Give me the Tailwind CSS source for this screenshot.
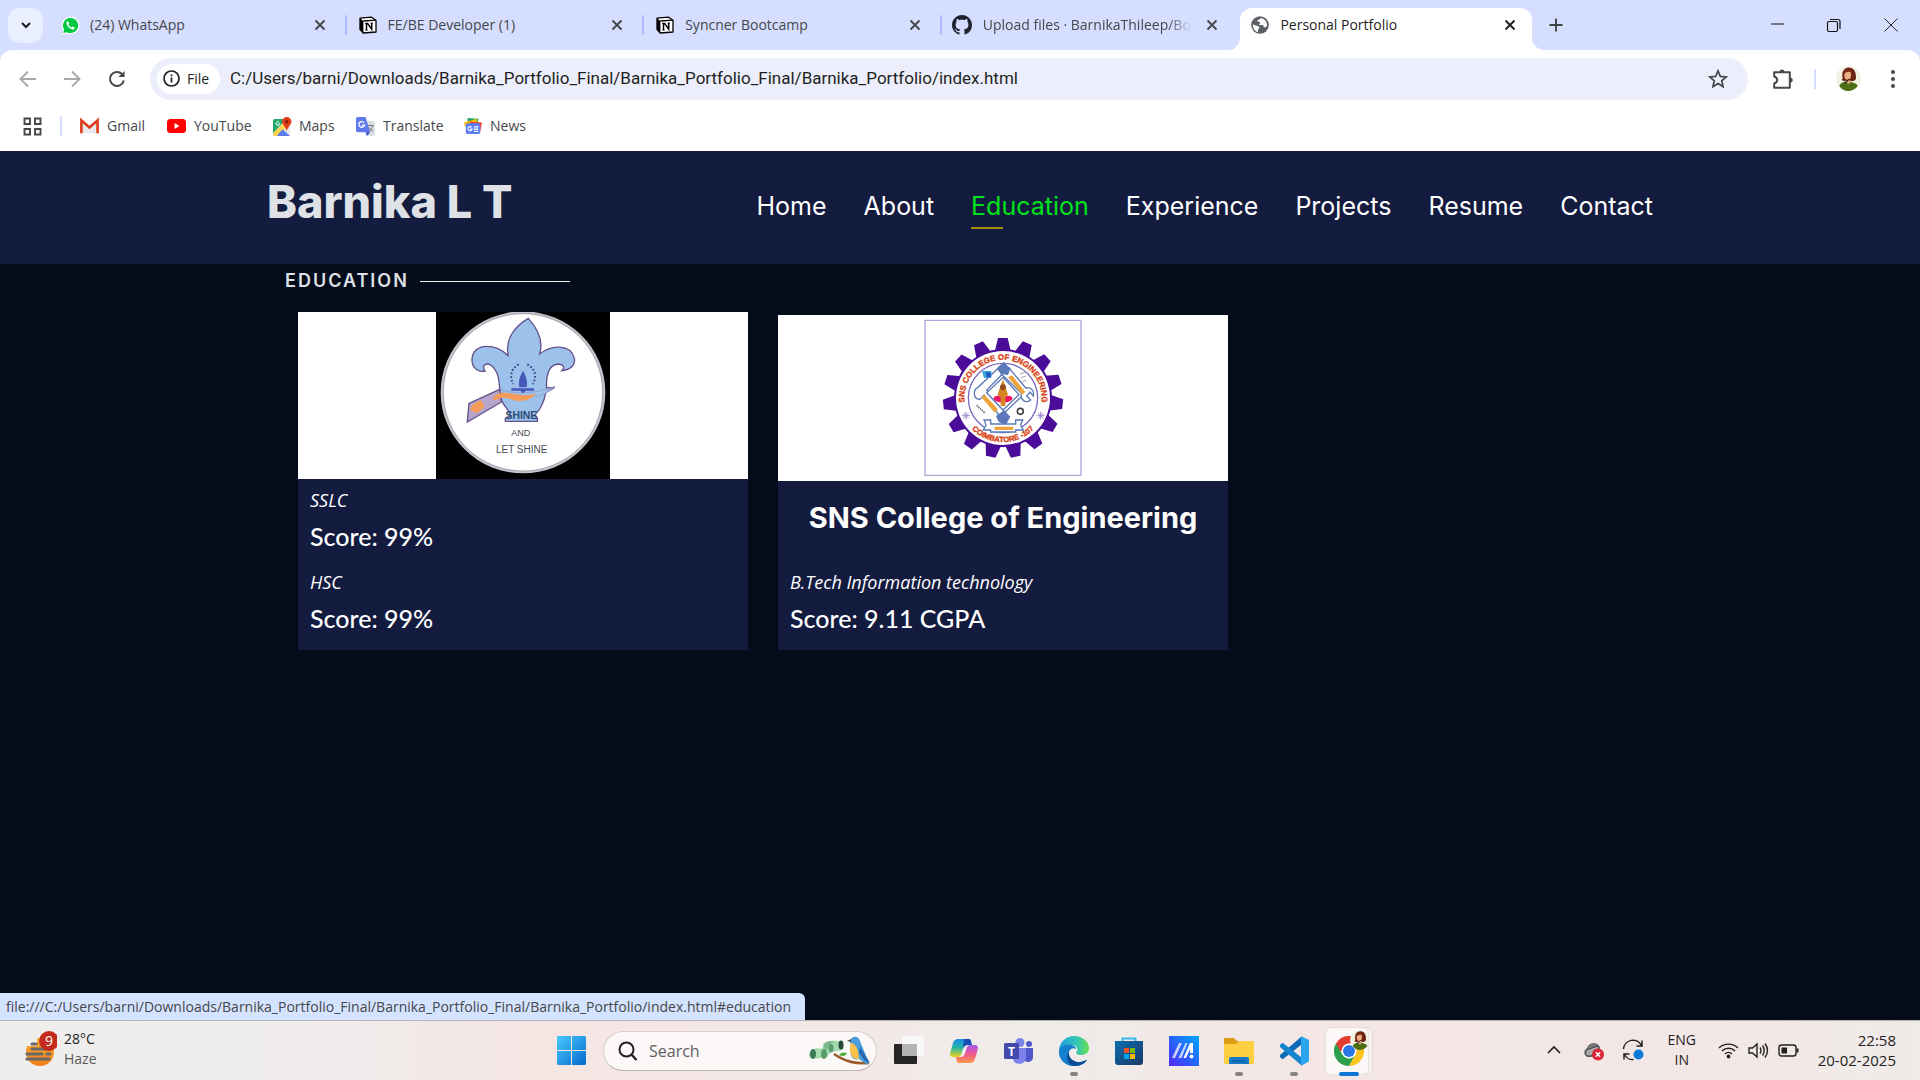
<!DOCTYPE html>
<html lang="en">
<head>
<meta charset="utf-8">
<meta name="viewport" content="width=device-width, initial-scale=1">
<title>Personal Portfolio</title>
<script src="https://cdn.jsdelivr.net/npm/@tailwindcss/browser@4"></script>
</head>
<body class="flex min-h-screen flex-col overflow-x-hidden bg-[#040b1b] font-['Open_Sans',sans-serif] text-sm text-[#45474a]">

<!-- shared icons -->
<svg class="hidden" aria-hidden="true">
  <symbol id="close" viewBox="0 0 16 16"><path d="M3.5 3.5l9 9M12.5 3.5l-9 9" stroke="currentColor" stroke-width="1.9" fill="none"/></symbol>
  <symbol id="notion" viewBox="0 0 18 18"><path d="M1 2.2L12.5 1.2l4.500 3V16l-12.800 1L1 13.400z" fill="#fff" stroke="#000" stroke-width="1.300" stroke-linejoin="round"/><path d="M1 2.200L4.400 5v12L1 13.400z"/><path d="M4.400 5l12.400-.8" stroke="#000" stroke-width="1.300"/><path d="M7.500 14V7.500h1.200l4 5.700V7" fill="none" stroke="#000" stroke-width="1.500"/><path d="M6 7.400h2.300M6.300 14.200h2.400M11.400 7h2.800" stroke="#000" stroke-width=".8"/></symbol>
  <symbol id="avatar" viewBox="0 0 30 30"><circle cx="15" cy="15" r="15" fill="#f3f2e2"/><path d="M8 15C6 6 11 1 17 2c6 1 7 7 7 12 0 4-5 5-8 3l-6 1c-3 0-4-1-2-3z" fill="#6b2314"/><ellipse cx="14" cy="11" rx="4" ry="5.500" fill="#f0ae83"/><path d="M9 10c0-6 8-9 10-3-4 0-7 0-10 3z" fill="#7d2b18"/><path d="M4 24c2-5 7-5 10-5 6 0 11 2 12 5-6 8-17 8-22 0z" fill="#4d6f14"/><path d="M11 18l4 4 4-4" fill="#eaa27b"/><path d="M10 20c3 0 3-3 6-4" stroke="#2b1612" stroke-width="1.500" fill="none"/></symbol>
</svg>

<!-- tab strip -->
<header class="bg-white">
  <div class="flex h-[50px] items-center justify-between bg-[#d6deff] pl-2">
    <button aria-label="Search tabs" class="grid size-[35px] shrink-0 place-items-center rounded-xl bg-[#e9efff]"><svg class="size-4" viewBox="0 0 16 16"><path d="M4 6l4 4 4-4" fill="none" stroke="#1d1d1f" stroke-width="2"/></svg></button>
    <div class="ml-1 grid h-full max-w-[1488px] flex-1 grid-cols-5 items-center">
      <div class="flex items-center pl-[14px] pr-[17px]">
        <svg class="size-[19px] shrink-0" viewBox="0 0 20 20"><path d="M.8 19.500l1.300-5A9.200 9.200 0 1 1 6 18.200z" fill="#fff"/><path d="M2.200 18l1-3.900A8 8 0 1 1 6.200 17z" fill="#00c940"/><path d="M7.200 5.300c-.9.2-1.600 1.200-1.300 2.600.5 2.700 3 5.500 6 6.200 1.500.3 2.600-.6 2.600-1.800l-2.100-1.200-1.100 1.100C9.600 11.400 8.300 10 7.800 8.600l.8-1.100z" fill="#fff"/></svg>
        <span class="ml-[10px] flex-1 truncate">(24) WhatsApp</span>
        <button aria-label="Close tab" class="size-4"><svg class="size-4"><use href="#close"/></svg></button>
      </div>
      <div class="relative flex items-center pl-[14px] pr-[17px]">
        <i class="absolute left-0 h-5 w-[2px] rounded bg-[#adbcff]"></i>
        <svg class="size-[18px] shrink-0"><use href="#notion"/></svg>
        <span class="ml-[11px] flex-1 truncate">FE/BE Developer (1)</span>
        <button aria-label="Close tab" class="size-4"><svg class="size-4"><use href="#close"/></svg></button>
      </div>
      <div class="relative flex items-center pl-[14px] pr-[17px]">
        <i class="absolute left-0 h-5 w-[2px] rounded bg-[#adbcff]"></i>
        <svg class="size-[18px] shrink-0"><use href="#notion"/></svg>
        <span class="ml-[11px] flex-1 truncate">Syncner Bootcamp</span>
        <button aria-label="Close tab" class="size-4"><svg class="size-4"><use href="#close"/></svg></button>
      </div>
      <div class="relative flex items-center pl-[12px] pr-[17px]">
        <i class="absolute left-0 h-5 w-[2px] rounded bg-[#adbcff]"></i>
        <svg class="size-5 shrink-0" viewBox="0 0 16 16"><path fill="#1f2430" d="M8 0C3.580 0 0 3.580 0 8c0 3.540 2.290 6.530 5.470 7.590.4.070.55-.17.55-.38 0-.19-.01-.82-.01-1.490-2.010.37-2.530-.49-2.690-.94-.09-.23-.48-.94-.82-1.130-.28-.15-.68-.52-.01-.53.63-.01 1.080.58 1.230.82.72 1.210 1.870.87 2.330.66.07-.52.28-.87.51-1.070-1.780-.2-3.640-.89-3.640-3.950 0-.87.31-1.590.82-2.150-.08-.2-.36-1.020.08-2.120 0 0 .67-.21 2.200.82.64-.18 1.320-.27 2-.27s1.360.09 2 .27c1.530-1.040 2.200-.82 2.200-.82.44 1.100.16 1.920.08 2.120.51.56.82 1.270.82 2.150 0 3.070-1.870 3.750-3.650 3.950.29.25.54.73.54 1.480 0 1.070-.01 1.930-.01 2.200 0 .21.15.46.55.38A8.010 8.010 0 0 0 16 8c0-4.420-3.580-8-8-8z"/></svg>
        <span class="ml-[11px] mr-3 flex-1 overflow-hidden whitespace-nowrap [mask-image:linear-gradient(to_right,black_88%,transparent)]">Upload files · BarnikaThileep/Bo</span>
        <button aria-label="Close tab" class="size-4"><svg class="size-4"><use href="#close"/></svg></button>
      </div>
      <div class="relative mx-[3px] mt-2 flex h-[42px] items-center rounded-t-xl bg-white pb-2 pl-[11px] pr-[14px] text-[#1f1f1f]">
        <i class="absolute -left-3 bottom-0 size-3 bg-[radial-gradient(circle_at_0_0,#d6deff_12px,white_12px)]"></i>
        <i class="absolute -right-3 bottom-0 size-3 bg-[radial-gradient(circle_at_100%_0,#d6deff_12px,white_12px)]"></i>
        <svg class="size-[18px] shrink-0" viewBox="0 0 18 18"><circle cx="9" cy="9" r="8.800" fill="#5c6066"/><path d="M10 2c-1 2-3 1-4 3 1 1 3 0 3 2 0 1-1 1-1 2h4l1 2c1 1 2 0 3-1 .5-4-2-7-6-8zM2 8c1 2 5 1 6 3 1 1 0 2-1 2v3C4 16 1.500 12 2 8z" fill="#fff"/></svg>
        <span class="ml-[11px] flex-1 truncate">Personal Portfolio</span>
        <button aria-label="Close tab" class="size-4"><svg class="size-4"><use href="#close"/></svg></button>
      </div>
    </div>
    <button aria-label="New tab" class="ml-[13px] grid size-4 shrink-0 place-items-center"><svg class="size-4" viewBox="0 0 16 16"><path d="M8 1.500v13M1.500 8h13" stroke="#3f4247" stroke-width="1.900"/></svg></button>
    <div class="ml-auto flex shrink-0">
      <button aria-label="Minimize" class="grid h-10 w-[57px] place-items-center"><svg class="size-4" viewBox="0 0 16 16"><path d="M2 7h13" stroke="#111"/></svg></button>
      <button aria-label="Restore" class="grid h-10 w-[57px] place-items-center"><svg class="size-4" viewBox="0 0 16 16"><rect x="1.500" y="4.500" width="10" height="10" rx="1.500" fill="none" stroke="#111" stroke-width="1.200"/><path d="M4 2.500h8a2 2 0 0 1 2 2V12" fill="none" stroke="#111" stroke-width="1.200"/></svg></button>
      <button aria-label="Close window" class="grid h-10 w-[58px] place-items-center"><svg class="size-4" viewBox="0 0 16 16"><path d="M1.500 1.500l13 13M14.500 1.500l-13 13" stroke="#222"/></svg></button>
    </div>
  </div>

  <!-- toolbar -->
  <div class="flex items-center bg-[#d6deff]"><div class="flex h-[57px] w-full items-center rounded-t-xl bg-white pl-[18px] pr-[15px]">
    <button aria-label="Back" class="size-5"><svg viewBox="0 0 20 20"><path d="M18 10H3M10 2.500L2.500 10l7.500 7.500" fill="none" stroke="#a7a9ad" stroke-width="1.900"/></svg></button>
    <button aria-label="Forward" class="ml-6 size-5"><svg viewBox="0 0 20 20"><path d="M2 10h15M10 2.500l7.500 7.500-7.500 7.500" fill="none" stroke="#a7a9ad" stroke-width="1.900"/></svg></button>
    <button aria-label="Reload" class="ml-[25px] size-5"><svg viewBox="0 0 20 20"><path d="M16.800 11.500A7 7 0 1 1 15 5l2 2" fill="none" stroke="#45474a" stroke-width="2"/><path d="M17.500 2v6h-6z" fill="#45474a"/></svg></button>
    <div class="ml-[23px] flex h-[42px] flex-1 items-center rounded-full bg-[#eceffb] pl-[7px] pr-5">
      <button class="flex h-[30px] w-[63px] shrink-0 items-center gap-[7px] rounded-full bg-white pl-[6px] font-medium text-[#1f1f1f]"><svg class="size-[17px]" viewBox="0 0 17 17"><circle cx="8.500" cy="8.500" r="7.500" fill="none" stroke="#1f1f1f" stroke-width="1.700"/><path d="M8.500 7.500v5M8.500 4.500v1.800" stroke="#1f1f1f" stroke-width="1.700"/></svg>File</button>
      <input aria-label="Address" class="ml-[10px] min-w-0 flex-1 bg-transparent font-['Roboto',sans-serif] text-[17px] text-[#1f1f1f] outline-none" value="C:/Users/barni/Downloads/Barnika_Portfolio_Final/Barnika_Portfolio_Final/Barnika_Portfolio/index.html">
      <button aria-label="Bookmark this page" class="size-5"><svg viewBox="0 0 20 20"><path d="M10 1.800l2.300 5.600 6 .5-4.600 3.900 1.400 5.900-5.100-3.100-5.100 3.100 1.400-5.900-4.600-3.900 6-.5z" fill="none" stroke="#45474a" stroke-width="1.700"/></svg></button>
    </div>
    <button aria-label="Extensions" class="ml-[24px] size-[22px]"><svg viewBox="0 0 22 22"><path d="M2.200 4.200h15.600v15.600H2.200v-4.300c4-1.200 4-5.800 0-7z" fill="none" stroke="#45474a" stroke-width="2" stroke-linejoin="round"/><path d="M7.500 4a2.500 2.500 0 0 1 5 0zM18.200 9.500a2.500 2.500 0 0 1 0 5z" fill="#45474a"/></svg></button>
    <i class="ml-[20px] h-5 w-[2px] bg-[#d6deff]"></i>
    <button aria-label="Profile" class="ml-[20px] size-[25px]"><svg class="size-full"><use href="#avatar"/></svg></button>
    <button aria-label="Menu" class="ml-[20px] size-6"><svg viewBox="0 0 24 24" fill="#45474a"><circle cx="12" cy="5" r="2"/><circle cx="12" cy="12" r="2"/><circle cx="12" cy="19" r="2"/></svg></button>
  </div></div>

  <!-- bookmarks -->
  <nav aria-label="Bookmarks" class="flex h-11 items-center pb-[6px] pl-[23px] text-sm">
    <button aria-label="All bookmarks" class="size-[19px]"><svg viewBox="0 0 19 19"><path d="M1.500 1.500h5.500v5.500H1.500zM12 1.500h5.500v5.500H12zM1.500 12h5.500v5.500H1.500zM12 12h5.500v5.500H12z" fill="none" stroke="#45474a" stroke-width="1.900"/></svg></button>
    <i class="ml-[18px] h-5 w-[2px] bg-[#d6deff]"></i>
    <a href="#" class="ml-[18px] flex w-[87px] items-center gap-[8px]"><svg class="size-[19px]" viewBox="0 0 20 20"><path d="M3 4l7 6 7-6v13H3z" fill="#e8eaed"/><path d="M1.500 17V3.500L10 11l8.500-7.500V17" fill="none" stroke="#dd3b1e" stroke-width="2.800"/></svg>Gmail</a>
    <a href="#" class="flex w-[106px] items-center gap-[8px]"><svg class="h-[14px] w-[19px]" viewBox="0 0 19 14"><rect width="19" height="14" rx="3.500" fill="#f00"/><path d="M7.500 4v6l5-3z" fill="#fff"/></svg>YouTube</a>
    <a href="#" class="flex w-[83px] items-center gap-[7px]"><svg class="size-[19px]" viewBox="0 0 20 20"><rect y="2" width="18" height="18" rx="2" fill="#e5e7eb"/><path d="M0 4a2 2 0 0 1 2-2h12L0 17z" fill="#22a565"/><path d="M0 17L15 3l3 4L5 20H2a2 2 0 0 1-2-2z" fill="#fbd34b"/><path d="M4 20l6-7 8 7z" fill="#5c7cf0"/><path d="M14.500 0a5 5 0 0 1 5 5c0 3-4 5-5 10-1-5-5-7-5-10a5 5 0 0 1 5-5z" fill="#e13c1b"/><circle cx="14.500" cy="5" r="1.800" fill="#7b1a0b"/><path d="M6.500 5.500A2 2 0 1 0 7 7.200H5" fill="none" stroke="#fff"/></svg>Maps</a>
    <a href="#" class="flex w-[108px] items-center gap-[8px]"><svg class="size-[19px]" viewBox="0 0 20 20"><path d="M8 4h10a2 2 0 0 1 2 2v12a2 2 0 0 1-2 2h-6z" fill="#dcdfe3"/><path d="M2 0h8l5 16H2a2 2 0 0 1-2-2V2a2 2 0 0 1 2-2z" fill="#5f79ee"/><path d="M10 16h5l-3.500 4z" fill="#3c50c8"/><path d="M8.500 6A3 3 0 1 0 9 8.500H6" fill="none" stroke="#fff" stroke-width="1.400"/><path d="M12.500 9h6M15.500 8v1M17.500 9c-.5 3-2 5-4 6.500M14 11c1 2 2 3 4 4" fill="none" stroke="#70767c"/></svg>Translate</a>
    <a href="#" class="flex items-center gap-[8px]"><svg class="size-[18px]" viewBox="0 0 20 20"><path d="M4 1l12 1-1 8H4z" fill="#22a565"/><path d="M0 6l14-4 1 8H1z" fill="#fbbc04"/><path d="M6 5l14 1-2 10-9-2z" fill="#e94435"/><rect x="2" y="7" width="16" height="12" rx="2" fill="#5b7df2"/><path d="M8.500 11.500A2.300 2.300 0 1 0 9 13.500H7M11 11h5M11 13.500h5M11 16h5" fill="none" stroke="#fff" stroke-width="1.300"/></svg>News</a>
  </nav>
</header>

<!-- portfolio page -->
<main class="relative flex-1">
  <div class="bg-[#131b3f]">
    <div class="mx-auto flex h-[113px] max-w-[1386px] items-center justify-between">
      <h1 class="pb-3 font-['Inter',sans-serif] text-[45px] font-extrabold leading-none text-[#dee2e6]"><a href="#">Barnika L T</a></h1>
      <nav aria-label="Sections" class="flex gap-[37px] pb-[3px] font-['Inter',sans-serif] text-[25px] leading-[30px] text-white">
        <a href="#home">Home</a><a href="#about">About</a>
        <a href="#education" class="relative text-[#00e31b]">Education<i class="absolute -bottom-2 left-0 h-[2px] w-8 bg-[#a38b00]"></i></a>
        <a href="#experience">Experience</a><a href="#projects">Projects</a><a href="#resume">Resume</a><a href="#contact">Contact</a>
      </nav>
    </div>
  </div>
  <section id="education" class="mx-auto max-w-[1384px] pl-[17px] pt-[7px] text-white">
    <h2 class="flex items-center gap-[11px] font-['Inter',sans-serif] text-lg font-semibold leading-5 tracking-[2px] text-[#dee2e6]">EDUCATION<i class="h-px w-[150px] bg-[#e6f3ea]"></i></h2>
    <div class="flex items-end gap-[30px] pl-[13px] pt-[21px]">
      <article class="w-[450px] bg-[#131b3f]">
        <div class="flex justify-center bg-white">
          <svg class="h-[167px] w-[174px]" viewBox="466 36 522 501" role="img" aria-label="School emblem">
            <path d="M466 36h522v501H466z"/>
            <ellipse cx="727" cy="277" rx="247" ry="243" fill="#c4c2cb"/><ellipse cx="727" cy="277" rx="239" ry="236" fill="#fff" stroke="#8d8797" stroke-width="2"/>
            <path d="M743 55C700 80 672 120 683 168C650 130 575 125 574 180C574 205 595 218 613 213C600 195 618 188 630 195C655 215 655 240 657 268C657 320 690 325 688 348L674 355V364H770V353L761 345C780 330 792 300 795 278L822 262L798 264C795 225 805 195 832 192C852 194 852 205 843 212C870 210 885 195 881 175C870 130 810 135 777 162C790 120 770 85 743 55Z" fill="#9cc2ec" stroke="#65518a" stroke-width="4"/>
            <path d="M657 268L565 310L560 366L662 306Z" fill="#b7a5cc" stroke="#65518a" stroke-width="4"/>
            <path d="M657 268C700 285 770 280 822 260L797 278C785 285 770 290 758 292" fill="#9cc2ec" stroke="#8a93c8" stroke-width="2"/>
            <path d="M640 290C670 260 710 300 770 280C740 305 720 310 680 294C660 290 650 300 636 300ZM575 315L600 300L612 318L590 340L568 330Z" fill="#f59b57"/>
            <path d="M714 193C685 210 690 235 697 252M740 193C770 210 765 235 757 252" fill="none" stroke="#3a3f86" stroke-width="6" stroke-dasharray="5 6"/>
            <path d="M727 212C720 225 712 240 716 262H738C742 245 737 230 727 212ZM692 265H760V272H735L727 280L719 272H692Z" fill="#4757b8"/>
            <g font-family="'Liberation Sans Narrow','Liberation Sans',sans-serif" text-anchor="middle" fill="#3f4a52"><text x="722" y="358" font-size="31" font-weight="700" fill="#294a73">SHINE</text><text x="720" y="408" font-size="27">AND</text><text x="723" y="460" font-size="30">LET SHINE</text></g>
          </svg>
        </div>
        <div class="px-3 pb-4 pt-2">
          <p class="text-lg italic leading-[26px]">SSLC</p>
          <p class="mt-[7px] font-['Lato',sans-serif] text-[25px] font-medium leading-[32px]">Score: 99%</p>
          <p class="mt-[17px] text-lg italic leading-[26px]">HSC</p>
          <p class="mt-[7px] font-['Lato',sans-serif] text-[25px] font-medium leading-[32px]">Score: 99%</p>
        </div>
      </article>
      <article class="w-[450px] bg-[#131b3f]">
        <div class="flex justify-center bg-white">
          <svg class="h-[166px] w-[158px]" viewBox="460 45 474 498" role="img" aria-label="SNS College of Engineering emblem">
            <path d="M463 61H931V526H463Z" fill="#fff" stroke="#b8a2dc" stroke-width="4"/>
            <defs><path id="tooth" d="M672 156L682 114H711L721 156Z"/><path id="arc-top" d="M584 322A116 116 0 1 1 810 322"/><path id="arc-low" d="M604 388A132 132 0 0 0 790 388"/></defs>
            <g fill="#4a0c99" id="gear"></g>
            <circle cx="697" cy="294" r="147" fill="#4a0c99"/><circle cx="697" cy="294" r="141" fill="#fff"/><circle cx="697" cy="294" r="104" fill="none" stroke="#7c6bc0" stroke-width="4"/>
            <g font-family="'Liberation Sans',sans-serif" font-weight="700" fill="#d8400f" stroke="#d8400f"><text font-size="24"><textPath href="#arc-top" startOffset="50%" text-anchor="middle">SNS COLLEGE OF ENGINEERING</textPath></text><text font-size="23"><textPath href="#arc-low" startOffset="50%" text-anchor="middle">COIMBATORE -107</textPath></text></g>
            <g fill="#fff" stroke="#5b79b8" stroke-width="4"><path d="M700 188L622 262C605 270 608 298 628 298L640 285L700 365L716 350L660 290L648 270L712 205Z"/><path d="M716 205L692 222L752 280C748 300 765 312 780 300L768 288L778 276L788 288C792 270 778 260 765 264Z"/><path d="M752 290L700 340M648 278L697 232L745 284L697 330Z"/><path d="M640 360H660V372H735V360H756L750 375L758 390H735V396H660V390H638L646 375Z"/></g>
            <path d="M678 205L698 188L720 205L712 225L690 222ZM676 348L698 332L718 352L706 374L684 366Z" fill="#5b79b8"/>
            <path d="M712 232L724 226L764 276L754 284ZM632 292L642 284L682 328L672 338ZM672 380H728V390H672Z" fill="#eda53b"/>
            <path d="M668 295C675 282 688 288 697 292C706 288 720 282 726 295C722 312 672 312 668 295Z" fill="#ee1560"/><path d="M697 238L712 285L704 290V318H690V290L680 285Z" fill="#d58620"/><circle cx="697" cy="262" r="9" fill="#9a4d1c"/>
            <path d="M634 213H662V234H640Z" fill="#38a8e0"/><path d="M646 217H660V232H648Z" fill="#2454c0"/>
            <circle cx="749" cy="334" r="9" fill="none" stroke="#444" stroke-width="5"/><path d="M618 316L644 340" stroke="#555" stroke-width="5" stroke-dasharray="4 3"/><path d="M748 222L764 216M750 234L766 228M754 246L768 240" stroke="#aaa" stroke-width="3"/>
            <path d="M574 347H598M586 335V359M578 339L594 355M594 339L578 355M798 347H822M810 335V359M802 339L818 355M818 339L802 355" stroke="#a18bd0" stroke-width="3"/>
          </svg>
        </div>
        <div class="px-3 pb-4 pt-[17px]">
          <h3 class="text-center font-['Inter',sans-serif] text-[29px] font-bold leading-10">SNS College of Engineering</h3>
          <p class="mt-[31px] text-lg italic leading-[26px]">B.Tech Information technology</p>
          <p class="mt-[7px] font-['Lato',sans-serif] text-[25px] font-medium leading-[32px]">Score: 9.11 CGPA</p>
        </div>
      </article>
    </div>
  </section>
  <div class="absolute bottom-0 left-0 flex h-[27px] items-center rounded-tr-md bg-[#d4e3ff] pl-[6px] pr-[14px] text-sm">file:///C:/Users/barni/Downloads/Barnika_Portfolio_Final/Barnika_Portfolio_Final/Barnika_Portfolio/index.html#education</div>
</main>

<!-- taskbar -->
<footer class="grid h-[60px] grid-cols-[1fr_auto_1fr] items-center border-t border-[#b9b3b2] bg-[linear-gradient(90deg,#eeeeed,#efeceb_18%,#f5e6e3_28%,#f3e8e6_42%,#efecea_54%,#f3e6e4_68%,#f3e7e5_88%,#efebe9)] text-[#222]">
  <button class="flex items-center gap-[7px] pb-[3px] pl-[25px] text-left leading-5">
    <svg class="h-9 w-8" viewBox="0 0 32 36"><defs><linearGradient id="sun" x2="0" y2="1"><stop stop-color="#fbb130"/><stop offset="1" stop-color="#ee7d1b"/></linearGradient></defs><circle cx="15" cy="21" r="14" fill="url(#sun)"/><path d="M0 6h12v9H0z" fill="#eeeeed"/><g stroke="#6a6868" stroke-width="3.200" stroke-linecap="round"><path d="M7 13h4M7 18h18M2 23h15M22 23h3M2 28h22"/></g><circle cx="24" cy="10" r="10" fill="#c42b1c"/><text x="24" y="15" text-anchor="middle" font-size="14" fill="#fff" font-family="Open Sans, sans-serif">9</text></svg>
    <span><span class="block">28°C</span><span class="block text-[#5c5a59]">Haze</span></span>
  </button>
  <div class="flex items-center">
    <button aria-label="Start" class="grid h-[50px] w-[55px] place-items-center"><svg class="size-[29px]" viewBox="0 0 29 29"><defs><linearGradient id="win" x2="1" y2="1"><stop stop-color="#48cbfb"/><stop offset="1" stop-color="#0669cf"/></linearGradient></defs><path d="M1 0h13v14H0V1zM15 0h13l1 1v13H15zM0 15h14v14H1l-1-1zM15 15h14v13l-1 1H15z" fill="url(#win)"/></svg></button>
    <label class="ml-1 mr-1 flex h-10 w-[274px] items-center rounded-full border border-[#d8cfcd] border-b-[#bdb4b2] bg-[#fcf8f7] pl-[14px] pr-[5px]">
      <svg class="size-5 shrink-0" viewBox="0 0 20 20"><circle cx="8.500" cy="8.500" r="7" fill="none" stroke="#222" stroke-width="2"/><path d="M13.500 13.500L18.500 19" stroke="#222" stroke-width="2.400"/></svg>
      <input aria-label="Search" placeholder="Search" class="ml-[11px] min-w-0 flex-1 bg-transparent text-base placeholder:text-[#5f5d5c] outline-none">
      <svg class="h-8 w-[62px] shrink-0" viewBox="0 0 62 32"><path d="M3 15c4-2 6-2 9-1l4-5c3-4 8-4 12-3h6v9l-10 2-4 2c-1 4-4 5-8 4l-9 1c-4-2-4-7 0-9z" fill="#a5dcae"/><path d="M14 10c3-5 8-4 12-3-5 1-6 5-9 9z" fill="#79b98b"/><ellipse cx="4" cy="19" rx="3" ry="5" fill="#3d7a55"/><ellipse cx="15" cy="19" rx="3" ry="5" fill="#5a9a6b"/><ellipse cx="32" cy="10" rx="2.500" ry="4.500" fill="#2a4a3a"/><ellipse cx="22" cy="13" rx="2.500" ry="4" fill="#5a9a6b"/><path d="M25 19c12 8 22 10 35 9" stroke="#9b5728" stroke-width="2.600" fill="none"/><path d="M30 20c2-3 5-3 8-2-1 3-4 4-8 2z" fill="#4cae3a"/><path d="M41 6c2-6 9-5 10 0l9 22-3 1-7-5c-7 2-10-4-8-12z" fill="#4a9ddb"/><path d="M42 8c5 0 8 8 8 16-7 1-11-6-8-16z" fill="#f9c14a"/><path d="M51 12l10 16-5-2-6-8z" fill="#2768ae"/><path d="M42 4l-4 2 4 1z" fill="#444"/></svg>
    </label>
    <button aria-label="Task view" class="grid h-[50px] w-[55px] place-items-center"><svg class="size-[30px]" viewBox="0 0 30 30"><rect y="8" width="23" height="20" rx="1" fill="#252525"/><rect x="8" y="0" width="22" height="20" rx="1" fill="#f8f8f8"/><path d="M8 8h15v12H8z" fill="#b4b4b4"/></svg></button>
    <button aria-label="Copilot" class="grid h-[50px] w-[55px] place-items-center"><svg class="size-7" viewBox="0 0 28 28"><defs><linearGradient id="cp1" x2="0" y2="1"><stop stop-color="#1a8be8"/><stop offset=".5" stop-color="#29b7a0"/><stop offset="1" stop-color="#f5d216"/></linearGradient><linearGradient id="cp2" x2="0" y2="1"><stop stop-color="#a55af0"/><stop offset=".5" stop-color="#f0578c"/><stop offset="1" stop-color="#fc9a4c"/></linearGradient></defs><path d="M8 2h11c2 0 2 3 3 6h-5c-3 0-4 3-5 7s-2 5-5 5H3c-4 0-3-4-2-7l2-7c1-3 3-4 5-4z" fill="url(#cp1)"/><path d="M14 2h5c2 0 2 3 3 6h-5c-1 0-3 1-4 4z" fill="#174bb5"/><path d="M20 26H9c-2 0-2-2-3-6h5c3 0 4-3 5-7s2-5 5-5h4c4 0 3 4 2 7l-2 7c-1 3-3 4-5 4z" fill="url(#cp2)"/></svg></button>
    <button aria-label="Teams" class="grid h-[50px] w-[55px] place-items-center"><svg class="size-[30px]" viewBox="0 0 30 30"><circle cx="16" cy="6.500" r="4.500" fill="#7b83eb"/><circle cx="25" cy="8" r="3" fill="#5059c9"/><path d="M19 12h10v9a5 5 0 0 1-9 3z" fill="#5059c9"/><path d="M9 12h13v9c0 9-13 9-13 1z" fill="#7b83eb"/><rect y="7" width="15" height="16" rx="1.500" fill="#4349ad"/><text x="7.500" y="20" text-anchor="middle" font-family="Open Sans, sans-serif" font-weight="700" font-size="12" fill="#fff">T</text></svg></button>
    <button aria-label="Edge" class="relative grid h-[50px] w-[55px] place-items-center"><svg class="size-[30px]" viewBox="0 0 30 30"><defs><linearGradient id="eg" x2="1"><stop stop-color="#1f9fe3"/><stop offset=".6" stop-color="#34c6b4"/><stop offset="1" stop-color="#6be04c"/></linearGradient></defs><path d="M0 14C1 5 8 0 15 0c9 0 15 6 15 12 0 5-4 7-8 7s-6-2-4-4c1-2 0-6-5-6-7 0-12 3-13 5z" fill="url(#eg)"/><path d="M0 14c2-5 7-6 11-5 4 0 6 2 6 4-3-2-6 0-7 3-1 5 3 11 12 10 3-1 5-2 6-2-3 4-7 6-13 6C6 30-1 23 0 14z" fill="#1580cf"/><path d="M10 16c-1 6 5 11 12 10 3-1 5-2 6-2-3 4-7 6-13 6-7-1-9-10-5-14z" fill="#0c4c94"/></svg><i class="absolute bottom-0 h-1 w-2 rounded-full bg-[#878382]"></i></button>
    <button aria-label="Microsoft Store" class="grid h-[50px] w-[55px] place-items-center"><svg class="size-[30px]" viewBox="0 0 30 30"><defs><linearGradient id="st" x2="1" y2="1"><stop stop-color="#0a6fae"/><stop offset="1" stop-color="#1d3767"/></linearGradient></defs><path d="M8.500 7V2.500h13V7" fill="none" stroke="#37b8ee" stroke-width="2"/><path d="M1 5h28v21a3 3 0 0 1-3 3H4a3 3 0 0 1-3-3z" fill="url(#st)"/><path d="M10 12h5v5h-5z" fill="#f25022"/><path d="M16 12h5v5h-5z" fill="#7fba00"/><path d="M10 18h5v5h-5z" fill="#00a4ef"/><path d="M16 18h5v5h-5z" fill="#ffb900"/></svg></button>
    <button aria-label="MyASUS" class="grid h-[50px] w-[55px] place-items-center"><svg class="size-[30px]" viewBox="0 0 30 30"><defs><linearGradient id="as" x1="0" y1="1" x2="1" y2="0"><stop stop-color="#5527f5"/><stop offset=".5" stop-color="#2466fb"/><stop offset="1" stop-color="#00a6fb"/></linearGradient></defs><path d="M0 0h30v30H0z" fill="url(#as)"/><path d="M3 22L10 7h3L6 22zM9.500 22L16.500 7h2L12.500 22z" fill="#e3e6ff" fill-opacity=".85"/><path d="M14.500 22L21 7h3v10h-3v-4l-4 9z" fill="#fff"/><circle cx="22.500" cy="20.500" r="1.900" fill="#fff"/></svg></button>
    <button aria-label="File Explorer" class="relative grid h-[50px] w-[55px] place-items-center"><svg class="size-[30px]" viewBox="0 0 30 30"><path d="M0 3a1 1 0 0 1 1-1h9l3 3h16v6H0z" fill="#dd9c12"/><path d="M0 8h12l3-3h14a1 1 0 0 1 1 1v21a1 1 0 0 1-1 1H1a1 1 0 0 1-1-1z" fill="#ffcf43"/><path d="M5 28v-5a2 2 0 0 1 2-2h16a2 2 0 0 1 2 2v5z" fill="#1778c8"/><path d="M9 25h12" stroke="#0b4c8c"/></svg><i class="absolute bottom-0 h-1 w-2 rounded-full bg-[#878382]"></i></button>
    <button aria-label="Visual Studio Code" class="relative grid h-[50px] w-[55px] place-items-center"><svg class="size-[30px]" viewBox="0 0 30 30"><path d="M22 1v8L4 23H3l-2-2v-2z" fill="#0a6bb5"/><path d="M1 9l2-2h1l18 14v8L1 11z" fill="#1685d1"/><path d="M22 0l7 3.500a1 1 0 0 1 1 1V25a1 1 0 0 1-1 1l-7 4z" fill="#2aa4ee"/></svg><i class="absolute bottom-0 h-1 w-2 rounded-full bg-[#878382]"></i></button>
    <button aria-label="Google Chrome" class="relative grid h-[50px] w-[55px] place-items-center"><i class="absolute left-1 top-px h-12 w-12 rounded-md border border-[#e2dad8] bg-[#f7f2f1]"></i><i class="absolute left-1 top-px h-12 w-11 rounded-md border border-[#e8e0de] bg-[#fbf8f7]"></i><svg class="relative size-[30px]" viewBox="0 0 48 48"><path d="M24 24H3.200V12A24 24 0 0 1 44.800 12V24z" fill="#e33b2e"/><path d="M3.200 12L13.600 30 24 36l10.400-6L24 48A24 24 0 0 1 3.200 12z" fill="#2c9f4b"/><path d="M44.800 12H24l10.400 18L24 48A24 24 0 0 0 44.800 12z" fill="#fcc31e"/><circle cx="24" cy="24" r="12" fill="#fff"/><circle cx="24" cy="24" r="9.500" fill="#2b77ea"/></svg><svg class="absolute right-[6px] top-1 size-5"><use href="#avatar"/></svg><i class="absolute bottom-0 h-1 w-5 rounded-full bg-[#0c74d4]"></i></button>
  </div>
  <div class="flex items-center justify-end pb-px pr-6 leading-5">
    <button aria-label="Hidden icons" class="size-4"><svg viewBox="0 0 16 16"><path d="M2 11l6-6 6 6" fill="none" stroke="#222" stroke-width="1.600"/></svg></button>
    <button aria-label="OneDrive" class="ml-[21px] size-[22px]"><svg viewBox="0 0 22 22"><path d="M4 18a5 5 0 0 1 0-9 7 7 0 0 1 13-1v10z" fill="#77777a"/><path d="M4 17a4 4 0 0 1 2-7l9-3 1 4-8 6z" fill="#aaa" stroke="#444"/><circle cx="15" cy="15.500" r="6" fill="#dc2434"/><path d="M12.800 13.300l4.400 4.400M17.200 13.300l-4.400 4.400" stroke="#fff" stroke-width="1.500"/></svg></button>
    <button aria-label="Windows Update" class="ml-[17px] size-[22px]"><svg viewBox="0 0 22 22" fill="none" stroke="#222" stroke-width="1.500"><path d="M1.500 10A9.500 9.500 0 0 1 19.500 6.500M20 1.500v5.500h-5.500M2 20.500V15h5.500M2.500 15.500c2 4 6 5.500 9 5"/><circle cx="16.500" cy="15.500" r="5" fill="#0b7ad8" stroke="none"/></svg></button>
    <button class="ml-[20px] w-[36px] text-center">ENG<br>IN</button>
    <button aria-label="Network, sound, battery" class="ml-[18px] flex items-center gap-[9px]">
      <svg class="size-[21px]" viewBox="0 0 21 21" fill="none" stroke="#222" stroke-width="1.400"><path d="M1 8a13.500 13.500 0 0 1 19 0M4 11a9.200 9.200 0 0 1 13 0M7 14a5 5 0 0 1 7 0"/><circle cx="10.500" cy="16.500" r="1.200" fill="#222"/></svg>
      <svg class="size-[21px]" viewBox="0 0 21 21" fill="none" stroke="#222" stroke-width="1.400"><path d="M1 8h3.500L9 4v13l-4.500-4H1zM12 7.500q2 3 0 6M14.500 5.500q3.500 5 0 10M17 3.500q5 7 0 14"/></svg>
      <svg class="size-[21px]" viewBox="0 0 21 21" fill="none" stroke="#222" stroke-width="1.400"><rect x="1" y="5" width="17" height="11" rx="2.500"/><path d="M3.500 7.500h5.500v6H3.500z" fill="#222" stroke="none"/><path d="M19.500 8.500v4" stroke-width="2"/></svg>
    </button>
    <button class="ml-[19px] pb-px text-right text-[15px]">22:58<br>20-02-2025</button>
  </div>
</footer>

<script>
// fifteen teeth, 24 degrees apart, around the emblem's centre
let teeth = "";
for (let i = 0; i < 15; i++) teeth += `<use href="#tooth" transform="rotate(${i * 24} 697 294)"/>`;
document.getElementById("gear").innerHTML = teeth;
</script>
</body>
</html>
